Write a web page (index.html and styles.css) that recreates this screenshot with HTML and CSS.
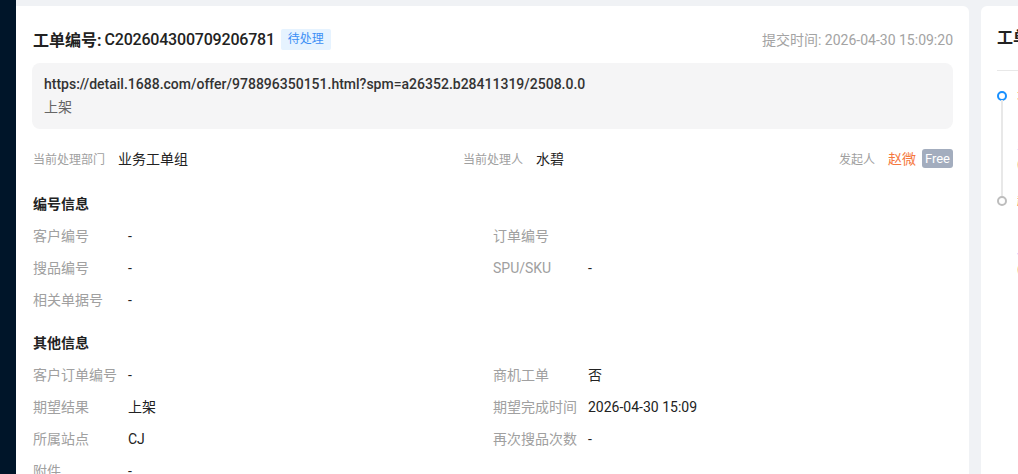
FILE: index.html
```html
<!DOCTYPE html>
<html lang="zh-CN">
  <head>
    <meta charset="UTF-8" />
    <title>工单详情</title>
    <link rel="stylesheet" href="styles.css">
  </head>
  <body>
    <div class="sider"></div>
    <div class="content">
      <div class="card detail">
        <div class="detail-head">
          <div class="detail-title">
            <span class="title-key">工单编号:</span>
            <span class="title-no">C202604300709206781</span>
            <span class="tag">待处理</span>
          </div>
          <div class="submit-time">提交时间: 2026-04-30 15:09:20</div>
        </div>

        <div class="desc-box">
          <div class="desc-link">https://detail.1688.com/offer/978896350151.html?spm=a26352.b28411319/2508.0.0</div>
          <div class="desc-text">上架</div>
        </div>

        <div class="people">
          <div class="person">
            <span class="person-label">当前处理部门</span>
            <span class="person-value">业务工单组</span>
          </div>
          <div class="person">
            <span class="person-label">当前处理人</span>
            <span class="person-value">水碧</span>
          </div>
          <div class="person">
            <span class="person-label">发起人</span>
            <span class="person-value orange">赵微</span>
            <span class="badge">Free</span>
          </div>
        </div>

        <div class="section">
          <div class="section-title">编号信息</div>
          <div class="fields">
            <div class="field"><span class="field-label">客户编号</span><span class="field-value">-</span></div>
            <div class="field"><span class="field-label">订单编号</span><span class="field-value"></span></div>
            <div class="field"><span class="field-label">搜品编号</span><span class="field-value">-</span></div>
            <div class="field"><span class="field-label">SPU/SKU</span><span class="field-value">-</span></div>
            <div class="field"><span class="field-label">相关单据号</span><span class="field-value">-</span></div>
          </div>
        </div>

        <div class="section">
          <div class="section-title">其他信息</div>
          <div class="fields">
            <div class="field"><span class="field-label">客户订单编号</span><span class="field-value">-</span></div>
            <div class="field"><span class="field-label">商机工单</span><span class="field-value">否</span></div>
            <div class="field"><span class="field-label">期望结果</span><span class="field-value">上架</span></div>
            <div class="field"><span class="field-label">期望完成时间</span><span class="field-value">2026-04-30 15:09</span></div>
            <div class="field"><span class="field-label">所属站点</span><span class="field-value">CJ</span></div>
            <div class="field"><span class="field-label">再次搜品次数</span><span class="field-value">-</span></div>
            <div class="field"><span class="field-label">附件</span><span class="field-value">-</span></div>
          </div>
        </div>
      </div>

      <div class="card flow">
        <div class="flow-title">工单流转</div>
        <div class="flow-list">
          <div class="flow-item">
            <div class="flow-dot active"></div>
            <div class="flow-body">
              <div class="flow-name">水碧 处理中</div>
              <div class="flow-note">业务工单组</div>
              <div class="flow-time">(2026-04-30 15:09)</div>
            </div>
          </div>
          <div class="flow-item">
            <div class="flow-dot"></div>
            <div class="flow-body">
              <div class="flow-name">赵微 提交</div>
              <div class="flow-note">发起工单</div>
              <div class="flow-time">(2026-04-30 15:09)</div>
            </div>
          </div>
        </div>
      </div>
    </div>
  </body>
</html>
```

FILE: styles.css
```css
*{
    box-sizing: border-box;
    margin: 0;
    padding: 0;
}
html, body{
    height: 100%;
}
body{
    display: flex;
    overflow: hidden;
    background-color: #f0f2f5;
    font-family: Roboto, "Noto Sans CJK SC", sans-serif;
    font-size: 14px;
    color: #333;
}
.sider{
    width: 16px;
    flex-shrink: 0;
    background-color: #001529;
}
.content{
    flex: 1;
    display: flex;
    gap: 12px;
    padding-top: 6px;
    min-width: 0;
}
.card{
    background-color: #fff;
    border-radius: 0 6px 0 0;
}
.detail{
    width: 953px;
    flex-shrink: 0;
    padding: 22px 16px 0 17px;
}
/* header */
.detail-head{
    display: flex;
    justify-content: space-between;
    align-items: center;
    height: 22px;
}
.detail-title{
    display: flex;
    align-items: center;
    font-size: 16px;
    color: #222;
}
.title-key{
    font-weight: 700;
    margin-right: 3px;
}
.title-no{
    font-weight: 500;
    letter-spacing: -0.2px;
}
.tag{
    margin-left: 6px;
    padding: 0 7px;
    height: 21px;
    line-height: 21px;
    font-size: 12px;
    color: #3b8ff5;
    background-color: #e6f3ff;
    border-radius: 2px;
}
.submit-time{
    color: #a3a3a3;
    font-size: 14px;
}
.desc-box{
    margin-top: 13px;
    margin-left: -1px;
    padding: 10px 12px;
    background-color: #f5f5f6;
    border-radius: 8px;
    line-height: 23px;
}
.desc-link{
    font-weight: 500;
    color: #333;
}
.desc-text{
    color: #666;
}
/* people row */
.people{
    display: flex;
    justify-content: space-between;
    align-items: center;
    margin-top: 18px;
    height: 22px;
}
.person{
    display: flex;
    align-items: center;
}
.person-label{
    font-size: 12px;
    color: #a0a0a0;
    margin-right: 13px;
}
.person-value{
    color: #222;
}
.person-value.orange{
    color: #f5783d;
}
.badge{
    margin-left: 6px;
    padding: 0 3px;
    height: 19px;
    line-height: 19px;
    font-size: 13px;
    color: #fff;
    background-color: #a3adbe;
    border-radius: 3px;
}
/* info sections */
.section{
    margin-top: 24px;
}
.section + .section{
    margin-top: 21px;
}
.section-title{
    font-weight: 700;
    color: #222;
    line-height: 22px;
}
.fields{
    display: grid;
    grid-template-columns: 460px 460px;
    row-gap: 10px;
    margin-top: 10px;
}
.field{
    display: flex;
    line-height: 22px;
}
.field-label{
    width: 95px;
    flex-shrink: 0;
    color: #a0a0a0;
}
.field-value{
    color: #222;
}
/* flow panel */
.flow{
    flex: 1;
    min-width: 300px;
    padding: 21px 16px 0 16px;
    border-radius: 6px 0 0 0;
}
.flow-title{
    font-size: 16px;
    font-weight: 700;
    color: #222;
    line-height: 22px;
    padding-bottom: 21px;
    border-bottom: 1px solid #e8e8e8;
}
.flow-list{
    padding-top: 15px;
}
.flow-item{
    display: flex;
    position: relative;
    min-height: 105px;
}
.flow-item:not(:last-child)::before{
    content: '';
    position: absolute;
    left: 4px;
    top: 14px;
    bottom: -5px;
    width: 2px;
    background-color: #e8e8e8;
}
.flow-dot{
    width: 10px;
    height: 10px;
    margin-top: 5px;
    border: 2px solid #bdbdbd;
    border-radius: 50%;
    background-color: #fff;
    flex-shrink: 0;
}
.flow-dot.active{
    border-color: #1890ff;
}
.flow-body{
    margin-left: 10px;
    line-height: 20px;
}
.flow-name{
    font-size: 12px;
    color: #f5783d;
}
.flow-note{
    margin-top: 28px;
    color: #1890ff;
}
.flow-time{
    color: #333;
}
```
